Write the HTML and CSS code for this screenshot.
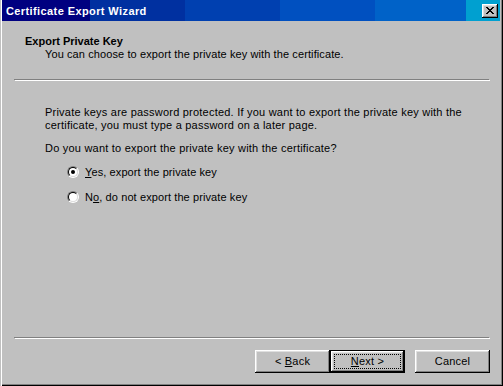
FILE: index.html
```html
<!DOCTYPE html>
<html>
<head>
<meta charset="utf-8">
<link rel="stylesheet" href="styles.css">
</head>
<body>
<div class="window">
  <div class="titlebar">
    <span class="title">Certificate Export Wizard</span>
    <span class="close">
      <svg width="8" height="7" viewBox="0 0 8 7" shape-rendering="crispEdges"><path fill="#000" d="M0 0h2v1H0zM6 0h2v1H6zM1 1h2v1H1zM5 1h2v1H5zM2 2h4v1H2zM3 3h2v1H3zM2 4h4v1H2zM1 5h2v1H1zM5 5h2v1H5zM0 6h2v1H0zM6 6h2v1H6z"/></svg>
    </span>
  </div>
  <div class="client">
    <div class="header">
      <div class="h-title">Export Private Key</div>
      <div class="h-sub">You can choose to export the private key with the certificate.</div>
    </div>
    <div class="etched"></div>
    <div class="content">
      <p class="para">Private keys are password protected. If you want to export the private key with the<br>certificate, you must type a password on a later page.</p>
      <p class="para question">Do you want to export the private key with the certificate?</p>
      <div class="options">
        <div class="option">
          <span class="radio"><span class="radio-in checked"></span></span>
          <span class="label"><u>Y</u>es, export the private key</span>
        </div>
        <div class="option">
          <span class="radio"><span class="radio-in"></span></span>
          <span class="label">N<u>o</u>, do not export the private key</span>
        </div>
      </div>
    </div>
    <div class="etched"></div>
    <div class="buttons">
      <span class="btn"><span class="txt">&lt; <u>B</u>ack</span></span>
      <span class="btn default"><span class="focus"><span class="txt"><u>N</u>ext &gt;</span></span></span>
      <span class="btn cancel"><span class="txt">Cancel</span></span>
    </div>
  </div>
</div>
</body>
</html>
```

FILE: styles.css
```css
html, body {
  margin: 0;
  padding: 0;
  background: #c0c0c0;
}
body {
  font-family: "Liberation Sans", Arial, sans-serif;
  font-size: 11px;
  line-height: 13px;
  color: #000;
}
.window {
  width: 503px;
  height: 386px;
  box-sizing: border-box;
  background: #c0c0c0;
  padding: 0 3px 2px 2px;
  display: flex;
  flex-direction: column;
  box-shadow: inset 1px 0 0 #c0c0c0, inset 2px 0 0 #fff, inset -1px -1px 0 #000, inset -2px -2px 0 #808080;
}
.titlebar {
  height: 21px;
  display: flex;
  align-items: flex-start;
  flex-shrink: 0;
  background: linear-gradient(to right,
    #000080 0 88px,
    #0030a0 88px 183px,
    #0040b0 183px 278px,
    #0050c0 278px 373px,
    #0062c8 373px 464px,
    #00a0d0 464px);
}
.title {
  color: #fff;
  font-weight: bold;
  letter-spacing: 0.4px;
  padding-left: 4px;
  line-height: 21px;
  padding-top: 1px;
}
.close {
  margin-left: auto;
  margin-right: 2px;
  margin-top: 4px;
  width: 16px;
  height: 14px;
  box-sizing: border-box;
  background: #c0c0c0;
  box-shadow: inset -1px -1px 0 #000, inset 1px 1px 0 #fff, inset -2px -2px 0 #808080, inset 2px 2px 0 #dfdfdf;
  display: flex;
  justify-content: center;
  align-items: flex-start;
  padding-top: 3px;
}
.close svg {
  display: block;
}
.client {
  flex: 1;
  display: flex;
  flex-direction: column;
}
.header {
  padding: 13px 0 0 23px;
}
.h-title {
  font-weight: bold;
  line-height: 14px;
}
.h-sub {
  padding-left: 20px;
  letter-spacing: 0.1px;
}
.etched {
  height: 1px;
  background: #808080;
  margin: 18px 11px 0 12px;
  box-shadow: 1px 1px 0 #fff;
  flex-shrink: 0;
}
.content {
  flex: 1;
  padding: 26px 0 0 43px;
  letter-spacing: 0.22px;
}
.content + .etched {
  margin-top: 0;
}
.para {
  margin: 0;
}
.question {
  margin-top: 10px;
}
.options {
  margin: 11px 0 0 22px;
  display: flex;
  flex-direction: column;
  gap: 12px;
  letter-spacing: 0.1px;
}
.option {
  display: flex;
  align-items: flex-start;
  gap: 6px;
}
.radio {
  width: 12px;
  height: 12px;
  box-sizing: border-box;
  border-radius: 50%;
  border: 1px solid;
  border-color: #808080 #fff #fff #808080;
  flex-shrink: 0;
}
.radio-in {
  display: block;
  width: 10px;
  height: 10px;
  box-sizing: border-box;
  border-radius: 50%;
  border: 1px solid;
  border-color: #000 #dfdfdf #dfdfdf #000;
  background: #fff;
  position: relative;
}
.radio-in.checked::after {
  content: "";
  position: absolute;
  left: 2px;
  top: 2px;
  width: 4px;
  height: 4px;
  border-radius: 50%;
  background: #000;
}
.buttons {
  display: flex;
  justify-content: flex-end;
  padding: 12px 10px 11px 0;
}
.btn {
  width: 75px;
  height: 23px;
  box-sizing: border-box;
  display: flex;
  align-items: center;
  justify-content: center;
  background: #c0c0c0;
  box-shadow: inset -1px -1px 0 #000, inset 1px 1px 0 #fff, inset -2px -2px 0 #808080, inset 2px 2px 0 #dfdfdf;
}
.txt {
  white-space: pre;
  letter-spacing: 0.2px;
}
.btn.default {
  box-shadow: inset 0 0 0 1px #000, inset -2px -2px 0 #000, inset 2px 2px 0 #fff, inset -3px -3px 0 #808080, inset 3px 3px 0 #dfdfdf;
  padding: 4px;
}
.focus {
  flex: 1;
  align-self: stretch;
  display: flex;
  align-items: center;
  justify-content: center;
  border: 1px dotted #000;
}
.btn.cancel {
  margin-left: 10px;
}
u {
  text-decoration: underline;
  text-underline-offset: 1px;
}
```
